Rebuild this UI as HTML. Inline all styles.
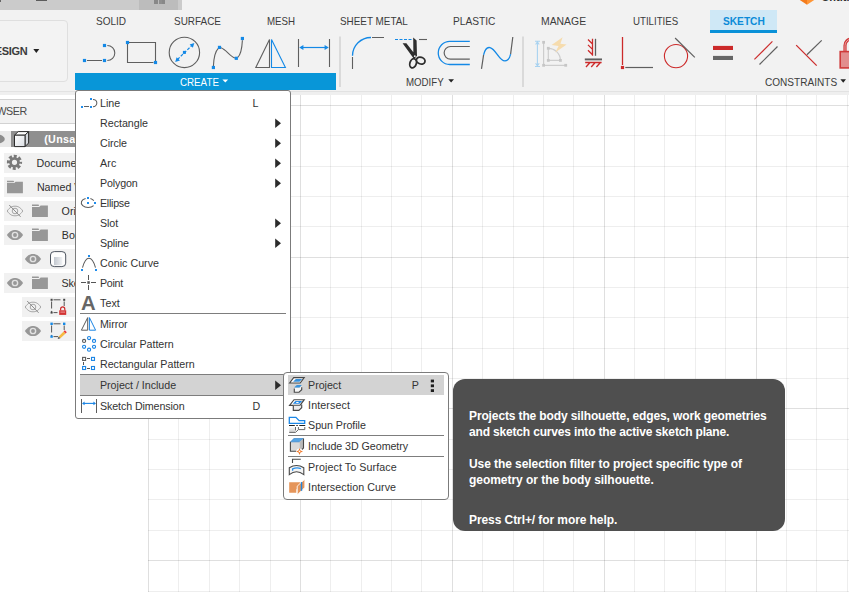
<!DOCTYPE html><html lang="en"><head><meta charset="utf-8"><title>Sketch - Create menu</title>
<style>
html,body{margin:0;padding:0;background:#fff}
body{width:849px;height:592px;overflow:hidden;position:relative;font-family:"Liberation Sans",sans-serif}
.abs{position:absolute;left:0;top:0;overflow:visible}
div.abs{width:849px;height:592px}
.box{position:absolute;box-sizing:border-box}
.t{position:absolute;white-space:pre;line-height:1;font-size:10.7px}
#app{position:absolute;left:0;top:0;width:849px;height:592px;overflow:hidden;background:#fff}
#toolbar{position:absolute;left:0;top:0;width:849px;height:91px;background:#f2f2f2}
.row{position:absolute;height:19.7px;background:#f1f1f1}
.sep{position:absolute;height:1px;background:#7d7d7d}
</style></head><body><div id="app">
<div id="canvas" class="abs"><svg class="abs" width="849" height="592" viewBox="0 0 849 592" shape-rendering="crispEdges"><style>.gm{fill:rgba(0,0,0,.065)}.gM{fill:rgba(0,0,0,.125)}</style><rect class="gM" x="148" y="95" width="1" height="497"/><rect class="gm" x="178" y="95" width="1" height="497"/><rect class="gm" x="209" y="95" width="1" height="497"/><rect class="gm" x="239" y="95" width="1" height="497"/><rect class="gm" x="270" y="95" width="1" height="497"/><rect class="gM" x="300" y="95" width="1" height="497"/><rect class="gm" x="330" y="95" width="1" height="497"/><rect class="gm" x="361" y="95" width="1" height="497"/><rect class="gm" x="391" y="95" width="1" height="497"/><rect class="gm" x="421" y="95" width="1" height="497"/><rect class="gM" x="452" y="95" width="1" height="497"/><rect class="gm" x="482" y="95" width="1" height="497"/><rect class="gm" x="513" y="95" width="1" height="497"/><rect class="gm" x="543" y="95" width="1" height="497"/><rect class="gm" x="573" y="95" width="1" height="497"/><rect class="gM" x="604" y="95" width="1" height="497"/><rect class="gm" x="634" y="95" width="1" height="497"/><rect class="gm" x="664" y="95" width="1" height="497"/><rect class="gm" x="695" y="95" width="1" height="497"/><rect class="gm" x="725" y="95" width="1" height="497"/><rect class="gM" x="756" y="95" width="1" height="497"/><rect class="gm" x="786" y="95" width="1" height="497"/><rect class="gm" x="816" y="95" width="1" height="497"/><rect class="gm" x="847" y="95" width="1" height="497"/><rect class="gM" x="148" y="105" width="701" height="1"/><rect class="gm" x="148" y="135" width="701" height="1"/><rect class="gm" x="148" y="166" width="701" height="1"/><rect class="gm" x="148" y="196" width="701" height="1"/><rect class="gm" x="148" y="226" width="701" height="1"/><rect class="gM" x="148" y="257" width="701" height="1"/><rect class="gm" x="148" y="287" width="701" height="1"/><rect class="gm" x="148" y="317" width="701" height="1"/><rect class="gm" x="148" y="348" width="701" height="1"/><rect class="gm" x="148" y="378" width="701" height="1"/><rect class="gM" x="148" y="408" width="701" height="1"/><rect class="gm" x="148" y="439" width="701" height="1"/><rect class="gm" x="148" y="469" width="701" height="1"/><rect class="gm" x="148" y="499" width="701" height="1"/><rect class="gm" x="148" y="530" width="701" height="1"/><rect class="gM" x="148" y="560" width="701" height="1"/><rect class="gm" x="148" y="591" width="701" height="1"/></svg></div>
<div id="toolbar">
<div class="box" style="left:0;top:0;width:182px;height:9.6px;background:#cbcbcb"></div>
<div class="box" style="left:139px;top:0;width:39px;height:9.6px;background:#bcbcbc"></div>
<div class="box" style="left:35.5px;top:0;width:11.4px;height:1px;background:#5c5c5c"></div>
<div class="box" style="left:0;top:0;width:1px;height:1.5px;background:#666"></div>
<div class="box" style="left:154.4px;top:0;width:3.3px;height:3.6px;background:#888"></div>
<div class="box" style="left:158.5px;top:0;width:3px;height:3.6px;background:#8e8e8e"></div>
<div class="box" style="left:162.2px;top:0;width:3.3px;height:3.6px;background:#888"></div>
<div class="box" style="left:-10px;top:20px;width:77.8px;height:61.5px;border:1.5px solid #dfdfdf;border-radius:4px;background:#f3f3f3"></div>
<div class="box" style="left:710.2px;top:9.9px;width:66.5px;height:23.6px;background:#cfe8f6;border-bottom:3.4px solid #0a91d8"></div>
<div class="box" style="left:75.2px;top:73px;width:260.8px;height:17px;background:#0896d8"></div>
<svg class="abs" width="849" height="100" viewBox="0 0 849 100"><g fill="none" stroke-width="1.1" stroke-linecap="butt"><path stroke="#5f5f5f" d="M87 60.5H102M107.3 45.5A7.5 7.5 0 0 1 107.3 60.5"/><rect x="82.90" y="58.90" width="3.2" height="3.2" fill="#1489e6"/><rect x="102.90" y="58.90" width="3.2" height="3.2" fill="#1489e6"/><rect x="102.90" y="43.90" width="3.2" height="3.2" fill="#1489e6"/><path stroke="#5f5f5f" d="M129 42.5H155.5V61M153.5 62.5H127.5V44"/><rect x="125.90" y="40.90" width="3.2" height="3.2" fill="#1489e6"/><rect x="153.90" y="60.90" width="3.2" height="3.2" fill="#1489e6"/><circle stroke="#5f5f5f" cx="184.4" cy="52.4" r="15.2"/><path stroke="#1489e6" stroke-width="1.2" stroke-dasharray="3 1.6" d="M177.5 59.5L191.8 45.5"/><path fill="#1489e6" stroke="none" d="M175.2 61.9L176.6 57.3L180 60.6ZM194.3 43.1L189.6 44.4L192.9 47.8Z"/><rect x="182.90" y="50.90" width="3" height="3" fill="#1489e6"/><path stroke="#5f5f5f" d="M213.4 66C213.8 58 215.5 51 218.3 48.3M221 47.8C226 49.5 230 56.5 235 58M237.6 57.6C240.5 55 242 48 242.4 40.2"/><rect x="211.80" y="65.90" width="3.2" height="3.2" fill="#1489e6"/><rect x="217.90" y="45.80" width="3.2" height="3.2" fill="#1489e6"/><rect x="234.70" y="56.70" width="3.2" height="3.2" fill="#1489e6"/><rect x="240.80" y="36.90" width="3.2" height="3.2" fill="#1489e6"/><path stroke="#5f5f5f" d="M269.5 39.4V67.5H255.8Z"/><path stroke="#1489e6" d="M271.5 39.4V67.5H285.4Z"/><path stroke="#5f5f5f" d="M298.5 39V67M329.5 39V67"/><path stroke="#1489e6" stroke-width="1.2" d="M301 47.5H327"/><path fill="#1489e6" stroke="none" d="M299.2 47.5L303.4 45.1V49.9ZM328.8 47.5L324.6 45.1V49.9Z"/><path stroke="#dadada" stroke-width="2" d="M340 36.5V87"/><path stroke="#dadada" stroke-width="2" d="M523 36.5V87"/><path stroke="#5f5f5f" d="M352.5 57V69M372 37.5H384"/><path stroke="#1489e6" stroke-width="1.3" d="M352.5 55.8A18.4 18.4 0 0 1 371 37.5"/><path stroke="#1489e6" stroke-width="1" stroke-dasharray="3 1.5" d="M395 39.5H412"/><path stroke="#5f5f5f" d="M419 39.5H427"/><path fill="#2e2e2e" stroke="none" d="M402.6 43.3L406.4 43.3L416.6 56.6L414 59ZM413.2 37.6L416.6 40.5L417 56L413.4 56.5Z"/><ellipse cx="413.1" cy="63.3" rx="3.2" ry="4.7" transform="rotate(18 413.1 63.3)" stroke="#2e2e2e" stroke-width="1.8"/><ellipse cx="420.7" cy="60.6" rx="4.4" ry="3.3" transform="rotate(18 420.7 60.6)" stroke="#2e2e2e" stroke-width="1.8"/><circle cx="414.8" cy="56.2" r="0.9" fill="#f2f2f2" stroke="none"/><path stroke="#1489e6" stroke-width="1.3" d="M469.8 41.4H449.8A11.55 11.55 0 0 0 449.8 64.5H469.8"/><path stroke="#5f5f5f" stroke-width="1.2" d="M469.8 46.5H450.5A6.35 6.35 0 0 0 450.5 59.2H469.8"/><path stroke="#5f5f5f" stroke-width="1.2" d="M481.5 68.8L483.6 54.8M510.6 54.2L512.8 37"/><path stroke="#1489e6" stroke-width="1.3" d="M483.6 54.8C485 49 487.5 47 490 47.6C496 49 499 61 505 60.9C508 60.8 509.8 58 510.6 54.2"/><path stroke="#a8d2f0" d="M537.4 41.5V66.2M535 41.3H540M535 66.5H540M535.6 44.5L537.4 42L539.2 44.5M535.6 63.3L537.4 65.8L539.2 63.3"/><path stroke="#cdcdcd" stroke-width="1.2" d="M543.6 42.5V65.3H565.5M548.3 48.3V60.4H560.4M548.3 48.3A12.1 12.1 0 0 1 560.4 60.4"/><rect x="542.20" y="40.90" width="2.8" height="2.8" fill="#c6c6c6"/><rect x="542.20" y="63.90" width="2.8" height="2.8" fill="#c6c6c6"/><rect x="564.30" y="63.90" width="2.8" height="2.8" fill="#c6c6c6"/><rect x="546.90" y="46.90" width="2.8" height="2.8" fill="#c6c6c6"/><rect x="546.90" y="59.00" width="2.8" height="2.8" fill="#c6c6c6"/><rect x="559.00" y="59.00" width="2.8" height="2.8" fill="#c6c6c6"/><path fill="#f6dcae" stroke="none" d="M562.6 37.2L551.6 45L558.6 46L555.2 52.6L566.6 44.6L560.4 43.8Z"/><path stroke="#5f5f5f" stroke-width="1.3" d="M595.5 38.8V55.8"/><path stroke="#5f5f5f" stroke-width="1.9" d="M584.8 59.4H602"/><path stroke="#cc2a2a" stroke-width="1.3" d="M592.5 38.8V55.8M592.5 44L588 39.5M592.5 49.4L588 44.9M592.5 54.8L588 50.3M585.2 62.5H601.6M590 62.5L586 67M595.2 62.5L591.2 67M600.4 62.5L596.4 67"/><path stroke="#cc2a2a" stroke-width="1.3" d="M622.5 37V65"/><rect x="620.90" y="65.90" width="3.2" height="3.2" fill="#cc2a2a"/><path stroke="#5f5f5f" stroke-width="1.2" d="M625.3 67.5H653"/><circle stroke="#cc2a2a" stroke-width="1.1" cx="676" cy="56.1" r="11.6"/><path stroke="#5f5f5f" stroke-width="1.2" d="M675.1 38L694.8 57.4"/><rect x="713" y="45.9" width="20" height="4.1" fill="#cc2a2a" stroke="none"/><rect x="713" y="55.9" width="20" height="4.1" fill="#666" stroke="none"/><path stroke="#cc2a2a" stroke-width="1.2" d="M754.4 59.4L772.4 41.4"/><path stroke="#5f5f5f" stroke-width="1.2" d="M759.5 64.5L777.5 46.5"/><path stroke="#cc2a2a" stroke-width="1.2" d="M796.2 45.1L816.7 65.7"/><path stroke="#5f5f5f" stroke-width="1.2" d="M806.9 54.7L821.7 40.4"/><path stroke="#cf3a3a" stroke-width="3.2" d="M845 51V45.5A6.4 6.4 0 0 1 857.8 45.5V51"/><path stroke="#eaa0a0" stroke-width="1" d="M845 51V45.5A6.4 6.4 0 0 1 857.8 45.5V51"/><rect x="840.2" y="51.6" width="20" height="16.3" fill="#e28e8e" stroke="#cf3a3a" stroke-width="1.6"/></g><path fill="#fff" d="M222.4 79.4H228.2L225.3 82.6Z"/><path fill="#222" d="M448.3 79.2H454L451.15 82.5Z"/><path fill="#222" d="M840.4 79.3H846L843.2 82.8Z"/><path fill="#222" d="M33.3 49H39.3L36.3 53Z"/><path fill="#f47c1c" d="M799.8 0L807 4.7V0Z"/><path fill="#ff9636" d="M807 0V4.7L814.2 0Z"/></svg>
<span class="t" style="top:15px;font-size:11px;line-height:12px;letter-spacing:0px;color:#3c3c3c;transform:scaleX(0.9117);transform-origin:0 0;left:95.90px;">SOLID</span><span class="t" style="top:15px;font-size:11px;line-height:12px;letter-spacing:0px;color:#3c3c3c;transform:scaleX(0.9044);transform-origin:0 0;left:173.70px;">SURFACE</span><span class="t" style="top:15px;font-size:11px;line-height:12px;letter-spacing:0px;color:#3c3c3c;transform:scaleX(0.8842);transform-origin:0 0;left:266.80px;">MESH</span><span class="t" style="top:15px;font-size:11px;line-height:12px;letter-spacing:0px;color:#3c3c3c;transform:scaleX(0.8993);transform-origin:0 0;left:339.90px;">SHEET METAL</span><span class="t" style="top:15px;font-size:11px;line-height:12px;letter-spacing:0px;color:#3c3c3c;transform:scaleX(0.9246);transform-origin:0 0;left:452.70px;">PLASTIC</span><span class="t" style="top:15px;font-size:11px;line-height:12px;letter-spacing:0px;color:#3c3c3c;transform:scaleX(0.9457);transform-origin:0 0;left:541.10px;">MANAGE</span><span class="t" style="top:15px;font-size:11px;line-height:12px;letter-spacing:0px;color:#3c3c3c;transform:scaleX(0.8803);transform-origin:0 0;left:633.30px;">UTILITIES</span><span class="t" style="top:15px;font-size:11px;line-height:12px;letter-spacing:0px;color:#0b8bd8;font-weight:700;transform:scaleX(0.9241);transform-origin:0 0;left:722.60px;">SKETCH</span><span class="t" style="top:76px;font-size:10.7px;line-height:12px;letter-spacing:0px;color:#ffffff;transform:scaleX(0.914);transform-origin:0 0;left:180.00px;">CREATE</span><span class="t" style="top:76px;font-size:10.7px;line-height:12px;letter-spacing:0px;color:#3c3c3c;transform:scaleX(0.9071);transform-origin:0 0;left:406.00px;">MODIFY</span><span class="t" style="top:76px;font-size:10.7px;line-height:12px;letter-spacing:0px;color:#3c3c3c;transform:scaleX(0.9411);transform-origin:0 0;left:764.80px;">CONSTRAINTS</span><span class="t" style="top:45px;font-size:11px;line-height:12px;letter-spacing:-0.3px;color:#3c3c3c;font-weight:700;right:821.50px;">DESIGN</span><span class="t" style="top:-9px;font-size:11px;line-height:12px;letter-spacing:0px;color:#333;font-weight:700;left:821.40px;">Untitled</span>
</div>
<div class="box" style="left:0;top:90.6px;width:849px;height:1px;background:#e2e2e2"></div>
<div class="box" style="left:0;top:91.6px;width:849px;height:3.2px;background:#efefef"></div>
<div id="browser" class="abs">
<div class="box" style="left:0;top:98.8px;width:148px;height:25.4px;background:#f2f2f2;border-top:1px solid #d2d2d2;border-bottom:1px solid #d2d2d2"></div>
<div class="row" style="left:0;top:131px;width:11px;height:15.8px;background:#e9e9e9"></div>
<div class="row" style="left:11px;top:131px;width:137px;height:15.8px;background:#8f8f8f"></div>
<div class="row" style="left:4px;top:153px;width:144px"></div>
<div class="row" style="left:4px;top:177px;width:144px"></div>
<div class="row" style="left:4px;top:201px;width:144px"></div>
<div class="row" style="left:4px;top:225px;width:144px"></div>
<div class="row" style="left:22px;top:249px;width:126px"></div>
<div class="row" style="left:4px;top:273px;width:144px"></div>
<div class="row" style="left:22px;top:297px;width:126px"></div>
<div class="row" style="left:22px;top:321px;width:126px"></div>
<svg class="abs" width="76" height="592" viewBox="0 0 76 592"><defs><linearGradient id="cubeg" x1="0" y1="0" x2="1" y2="1"><stop offset="0" stop-color="#ffffff"/><stop offset="1" stop-color="#d9dde3"/></linearGradient><linearGradient id="cylg" x1="0" y1="0" x2="1" y2="0"><stop offset="0" stop-color="#c2c7cf"/><stop offset="1" stop-color="#eff1f3"/></linearGradient></defs><ellipse cx="-2.2" cy="139" rx="7" ry="4.4" fill="#8c8c8c"/><g stroke="#2b2b2b" stroke-width="1" stroke-linejoin="round"><path fill="#fdfdfd" d="M14.5 135.2L18.2 131.6H28.6L25 135.2Z"/><path fill="#d5d9de" d="M25 135.2L28.6 131.6V143L25 146.6Z"/><rect x="14.5" y="135.2" width="10.5" height="11.4" fill="url(#cubeg)"/></g><g fill="none" stroke="#7a7a7a"><circle cx="14.5" cy="162.3" r="5.9" stroke-width="3.4" stroke-dasharray="2.9 1.734" stroke-dashoffset="1.45"/><circle cx="14.5" cy="162.3" r="4" stroke-width="2.8"/></g><path fill="#979797" d="M7 180.8H13.4L14.2 181.5L13.6 182.3H7Z"/><path fill="#979797" d="M7 183.10000000000002H14.2L15.6 181.8H22.9V193.20000000000002H7Z"/><g fill="none" stroke="#a6a6a6" stroke-width="1"><path d="M7.2 211C10 206.89999999999998 12.4 206.2 15 206.2C17.6 206.2 20 206.89999999999998 22.8 211C20 215.10000000000002 17.6 215.8 15 215.8C12.4 215.8 10 215.10000000000002 7.2 211Z"/><circle cx="15" cy="211" r="2.8"/><path stroke="#8c8c8c" d="M9.2 205L20.6 216.8"/></g><path fill="#979797" d="M32 204.6H38.4L39.2 205.29999999999998L38.6 206.1H32Z"/><path fill="#979797" d="M32 206.9H39.2L40.6 205.6H47.9V217.0H32Z"/><path fill="#979797" d="M6.9 235C10 230.6 12.4 229.9 15 229.9C17.6 229.9 20 230.6 23.1 235C20 239.4 17.6 240.1 15 240.1C12.4 240.1 10 239.4 6.9 235Z"/><circle cx="15" cy="235" r="2.65" fill="none" stroke="#e2e2e2" stroke-width="1.4"/><path fill="#979797" d="M32 228.6H38.4L39.2 229.29999999999998L38.6 230.1H32Z"/><path fill="#979797" d="M32 230.9H39.2L40.6 229.6H47.9V241.0H32Z"/><path fill="#979797" d="M24.9 259C28 254.6 30.4 253.9 33 253.9C35.6 253.9 38 254.6 41.1 259C38 263.40000000000003 35.6 264.1 33 264.1C30.4 264.1 28 263.40000000000003 24.9 259Z"/><circle cx="33" cy="259" r="2.65" fill="none" stroke="#e2e2e2" stroke-width="1.4"/><rect x="50.5" y="251.6" width="15.2" height="15" rx="3.8" ry="3.4" fill="#fdfdfd" stroke="#3a424e" stroke-width=".9"/><rect x="54" y="257" width="8.3" height="8.2" fill="url(#cylg)"/><path fill="#979797" d="M6.9 283C10 278.59999999999997 12.4 277.9 15 277.9C17.6 277.9 20 278.59999999999997 23.1 283C20 287.40000000000003 17.6 288.1 15 288.1C12.4 288.1 10 287.40000000000003 6.9 283Z"/><circle cx="15" cy="283" r="2.65" fill="none" stroke="#e2e2e2" stroke-width="1.4"/><path fill="#979797" d="M32 276.6H38.4L39.2 277.3L38.6 278.1H32Z"/><path fill="#979797" d="M32 278.90000000000003H39.2L40.6 277.6H47.9V289.0H32Z"/><g fill="none" stroke="#a6a6a6" stroke-width="1"><path d="M25.2 307C28 302.9 30.4 302.2 33 302.2C35.6 302.2 38 302.9 40.8 307C38 311.1 35.6 311.8 33 311.8C30.4 311.8 28 311.1 25.2 307Z"/><circle cx="33" cy="307" r="2.8"/><path stroke="#8c8c8c" d="M27.2 301L38.6 312.8"/></g><g fill="none" stroke="#555" stroke-width="1"><path stroke-dasharray="7 2.4" d="M51.6 301.5V312.6M53.5 299.8H62.5M64.2 301.5V306"/><path d="M53.5 312.6H57.5"/></g><rect x="50.60" y="298.80" width="2" height="2" fill="#444"/><rect x="63.20" y="298.80" width="2" height="2" fill="#444"/><rect x="50.60" y="311.60" width="2" height="2" fill="#444"/><path d="M60.6 310.5V309A2.1 2.1 0 0 1 64.8 309V310.5" fill="none" stroke="#cc2a2a" stroke-width="1.2"/><rect x="59.2" y="310.3" width="7" height="4.6" fill="#d23232"/><rect x="60.4" y="311.6" width="4.6" height="1" fill="#ee9a9a"/><path fill="#979797" d="M24.9 331C28 326.59999999999997 30.4 325.9 33 325.9C35.6 325.9 38 326.59999999999997 41.1 331C38 335.40000000000003 35.6 336.1 33 336.1C30.4 336.1 28 335.40000000000003 24.9 331Z"/><circle cx="33" cy="331" r="2.65" fill="none" stroke="#e2e2e2" stroke-width="1.4"/><g fill="none" stroke="#555" stroke-width="1"><path stroke-dasharray="7 2.4" d="M51.6 325.5V336.6M53.5 323.8H62.5"/><path d="M64.2 325.5V330M53.5 336.6H58"/></g><rect x="50.40" y="322.60" width="2.4" height="2.4" fill="#1489e6"/><rect x="63.00" y="322.60" width="2.4" height="2.4" fill="#1489e6"/><rect x="50.40" y="335.40" width="2.4" height="2.4" fill="#1489e6"/><path fill="#f5b942" d="M58.6 336.6L63.6 331.4L65.6 333.4L60.4 338.2Z"/><path fill="#e8383d" d="M63.6 331.4L64.8 330.2L66.8 332.2L65.6 333.4Z"/><path fill="#555" d="M58.6 336.6L60.4 338.2L57.6 339Z"/></svg>
<span class="t" style="top:105px;font-size:10.7px;line-height:12px;letter-spacing:-0.4px;color:#4a4a4a;right:822.10px;">BROWSER</span><span class="t" style="top:133px;font-size:10.7px;line-height:12px;letter-spacing:0.35px;color:#ffffff;font-weight:700;left:44.20px;">(Unsaved)</span><span class="t" style="top:157px;font-size:10.7px;line-height:12px;letter-spacing:0px;color:#2e2e2e;left:36.60px;">Document Settings</span><span class="t" style="top:181px;font-size:10.7px;line-height:12px;letter-spacing:0px;color:#2e2e2e;left:36.90px;">Named Views</span><span class="t" style="top:205px;font-size:10.7px;line-height:12px;letter-spacing:0px;color:#2e2e2e;left:61.60px;">Origin</span><span class="t" style="top:229px;font-size:10.7px;line-height:12px;letter-spacing:0px;color:#2e2e2e;left:61.80px;">Bodies</span><span class="t" style="top:277px;font-size:10.7px;line-height:12px;letter-spacing:0px;color:#2e2e2e;left:61.40px;">Sketches</span>
</div>
<div id="menu" class="abs">
<div class="box" style="left:75px;top:90px;width:216px;height:329px;background:#fff;border:1px solid #7b7b7b;border-radius:3px"></div>
<div class="box" style="left:80.3px;top:375.2px;width:208px;height:19.8px;background:#d3d3d3"></div>
<div class="sep" style="left:80.3px;top:312.8px;width:205.4px"></div>
<div class="sep" style="left:80.3px;top:374.2px;width:205.4px"></div>
<div class="sep" style="left:80.3px;top:395px;width:205.4px"></div>
<svg class="abs" width="300" height="592" viewBox="0 0 300 592"><g fill="none" stroke-width="1"><rect x="84" y="106" width="5" height="1" fill="#606060" stroke="none"/><path stroke="#5c5c5c" stroke-width="1.05" d="M93 99.4A3.85 3.65 0 0 1 93 106.7"/><rect x="81" y="106" width="2" height="2" fill="#1e8cec" stroke="none"/><rect x="90" y="106" width="2" height="2" fill="#1e8cec" stroke="none"/><rect x="90" y="98" width="2" height="2" fill="#1e8cec" stroke="none"/><path stroke="#5c5c5c" stroke-width="1.05" d="M85.6 198.4A6.8 4.75 0 1 0 93.6 205.6M90.4 198.4Q92.4 199 93.8 200.6"/><rect x="87" y="197" width="2" height="2" fill="#1e8cec" stroke="none"/><rect x="87" y="202" width="2" height="2" fill="#1e8cec" stroke="none"/><rect x="94" y="202" width="2" height="2" fill="#1e8cec" stroke="none"/><path stroke="#5c5c5c" stroke-width="1.05" d="M82.5 267.6C84.2 261.6 86.6 258.3 88.9 258.3C91.2 258.3 93.8 261.6 95.5 267.6"/><rect x="88" y="255" width="2" height="2" fill="#1e8cec" stroke="none"/><rect x="81" y="269" width="2" height="2" fill="#1e8cec" stroke="none"/><rect x="95" y="269" width="2" height="2" fill="#1e8cec" stroke="none"/><rect x="81" y="282" width="5" height="1" fill="#555" stroke="none"/><rect x="91" y="282" width="5" height="1" fill="#555" stroke="none"/><rect x="88" y="275" width="1" height="5" fill="#555" stroke="none"/><rect x="88" y="285" width="1" height="5" fill="#555" stroke="none"/><rect x="87.3" y="281.2" width="2.5" height="2.6" fill="#5a5a5a" stroke="none"/><path stroke="#5c5c5c" d="M87.7 317.6V330.2H81.4Z"/><path stroke="#1a84e4" d="M89.4 317.6V330.2H95.6Z"/><circle cx="89.05" cy="338.00" r="1.55" stroke-width="1.15" stroke="#1a84e4"/><circle cx="94.03" cy="340.93" r="1.55" stroke-width="1.15" stroke="#1a84e4"/><circle cx="94.03" cy="346.78" r="1.55" stroke-width="1.15" stroke="#1a84e4"/><circle cx="89.05" cy="349.70" r="1.55" stroke-width="1.15" stroke="#1a84e4"/><circle cx="84.07" cy="346.78" r="1.55" stroke-width="1.15" stroke="#1a84e4"/><circle cx="84.07" cy="340.93" r="1.55" stroke-width="1.15" stroke="#5c5c5c"/><rect x="82.6" y="357.4" width="3" height="3" stroke="#5c5c5c" stroke-width="1.1"/><rect x="91.5" y="357.4" width="3" height="3" stroke="#1a84e4" stroke-width="1.1"/><rect x="82.6" y="366.5" width="3" height="3" stroke="#1a84e4" stroke-width="1.1"/><rect x="91.5" y="366.5" width="3" height="3" stroke="#1a84e4" stroke-width="1.1"/><rect x="87" y="358" width="3" height="1" fill="#555" stroke="none"/><rect x="87" y="368" width="3" height="1" fill="#555" stroke="none"/><rect x="83" y="362" width="1" height="3" fill="#555" stroke="none"/><rect x="81" y="399" width="1" height="14" fill="#5c5c5c" stroke="none"/><rect x="96" y="399" width="1" height="14" fill="#5c5c5c" stroke="none"/><path stroke="#1a84e4" stroke-width="1.1" d="M83.4 403.4H94.6"/><path fill="#1a84e4" stroke="none" d="M82 403.4L84.6 401.6V405.2ZM96 403.4L93.4 401.6V405.2Z"/></g><path fill="#2b2b2b" d="M275.2 118.40L281.0 123.2L275.2 128.00Z"/><path fill="#2b2b2b" d="M275.2 138.40L281.0 143.2L275.2 148.00Z"/><path fill="#2b2b2b" d="M275.2 158.40L281.0 163.2L275.2 168.00Z"/><path fill="#2b2b2b" d="M275.2 178.40L281.0 183.2L275.2 188.00Z"/><path fill="#2b2b2b" d="M275.2 218.40L281.0 223.2L275.2 228.00Z"/><path fill="#2b2b2b" d="M275.2 238.40L281.0 243.2L275.2 248.00Z"/><path fill="#2b2b2b" d="M275.2 380.40L281.0 385.2L275.2 390.00Z"/></svg>
<span class="t" style="top:97px;font-size:10.7px;line-height:12px;letter-spacing:0.02px;color:#333333;left:100.00px;">Line</span><span class="t" style="top:117px;font-size:10.7px;line-height:12px;letter-spacing:-0.016px;color:#333333;left:100.00px;">Rectangle</span><span class="t" style="top:137px;font-size:10.7px;line-height:12px;letter-spacing:-0.071px;color:#333333;left:100.00px;">Circle</span><span class="t" style="top:157px;font-size:10.7px;line-height:12px;letter-spacing:0.1px;color:#333333;left:100.00px;">Arc</span><span class="t" style="top:177px;font-size:10.7px;line-height:12px;letter-spacing:-0.161px;color:#333333;left:100.00px;">Polygon</span><span class="t" style="top:197px;font-size:10.7px;line-height:12px;letter-spacing:-0.269px;color:#333333;left:100.00px;">Ellipse</span><span class="t" style="top:217px;font-size:10.7px;line-height:12px;letter-spacing:-0.08px;color:#333333;left:100.00px;">Slot</span><span class="t" style="top:237px;font-size:10.7px;line-height:12px;letter-spacing:-0.17px;color:#333333;left:100.00px;">Spline</span><span class="t" style="top:257px;font-size:10.7px;line-height:12px;letter-spacing:0.017px;color:#333333;left:100.00px;">Conic Curve</span><span class="t" style="top:277px;font-size:10.7px;line-height:12px;letter-spacing:-0.275px;color:#333333;left:100.00px;">Point</span><span class="t" style="top:297px;font-size:10.7px;line-height:12px;letter-spacing:0.048px;color:#333333;left:100.00px;">Text</span><span class="t" style="top:318px;font-size:10.7px;line-height:12px;letter-spacing:-0.051px;color:#333333;left:100.00px;">Mirror</span><span class="t" style="top:338px;font-size:10.7px;line-height:12px;letter-spacing:-0.034px;color:#333333;left:100.00px;">Circular Pattern</span><span class="t" style="top:358px;font-size:10.7px;line-height:12px;letter-spacing:-0.019px;color:#333333;left:100.00px;">Rectangular Pattern</span><span class="t" style="top:379px;font-size:10.7px;line-height:12px;letter-spacing:-0.032px;color:#333333;left:100.00px;">Project / Include</span><span class="t" style="top:400px;font-size:10.7px;line-height:12px;letter-spacing:-0.103px;color:#333333;left:100.00px;">Sketch Dimension</span><span class="t" style="top:97px;font-size:10.7px;line-height:12px;letter-spacing:0px;color:#333333;left:252.60px;">L</span><span class="t" style="top:400px;font-size:10.7px;line-height:12px;letter-spacing:0px;color:#333333;left:252.50px;">D</span><span class="t" style="top:292px;font-size:20.3px;line-height:22px;letter-spacing:0px;color:#666666;font-weight:700;left:80.90px;">A</span>
</div>
<div id="submenu" class="abs">
<div class="box" style="left:283.4px;top:371.8px;width:166px;height:127.9px;background:#fff;border:1px solid #7b7b7b;border-radius:4px"></div>
<div class="box" style="left:288.1px;top:375.3px;width:155.9px;height:19.7px;background:#d3d3d3"></div>
<div class="sep" style="left:288.2px;top:434.9px;width:155.8px"></div>
<div class="sep" style="left:288.2px;top:455.9px;width:155.8px"></div>
<svg class="abs" width="460" height="592" viewBox="0 0 460 592"><defs><linearGradient id="spg" x1="0" y1="0" x2="0" y2="1"><stop offset="0" stop-color="#f6f6f6"/><stop offset="1" stop-color="#cfcfcf"/></linearGradient></defs><g fill="none" stroke-width="1.15" stroke-linejoin="miter"><path stroke="#484848" fill="#fdfdfd" d="M289.6 383L293.7 377.6H304.2L300.2 383Z"/><path stroke="none" fill="#3590dc" d="M293.1 381.8L295.8 378.9H302.2L299.5 381.8Z"/><path stroke="none" fill="#f6f6f6" d="M294.3 388H299.4L301.7 386V389.8L299 392.2H294.3Z"/><path stroke="none" fill="#3b94dc" d="M294.1 387.6L296.8 385.1H301.9L299.5 387.6Z"/><path stroke="#484848" d="M294.3 388.6V392.2H299L301.7 389.8V387.2"/><path stroke="#484848" fill="#fdfdfd" d="M289.6 405.3L294 399.7H304.2L300 405.3Z"/><path stroke="none" fill="#1f86e4" d="M292.8 403.8L295.5 400.9H302.2L299.5 403.8Z"/><rect x="296.2" y="401.9" width="2.4" height="1.1" fill="#fff" stroke="none"/><path stroke="none" fill="#ececec" d="M293.3 405.8H301.7V407.8L298.8 410.4H293.3Z"/><path stroke="#484848" d="M293.3 405.8V410.4H298.8L301.7 407.8V404.6"/><path stroke="#1a86e6" stroke-width="1.3" d="M289.3 417.3H295.9L299.1 420.7H304.7V423.4H289.3Z"/><path stroke="#222" stroke-width="1.1" d="M289 425.5H294.8M296.3 425.5H297.8M299.3 425.5H305.2"/><path stroke="none" fill="url(#spg)" d="M289.2 427.2H295.5V432H289.2Z"/><path stroke="#666" stroke-width="1" d="M289.2 432.4H295.5L298.4 429.6H304.8V427M295.5 427V430.4M298.4 427V429.4"/><path stroke="none" fill="#dadada" d="M290.4 442H299.5V451.3H290.4Z"/><path stroke="#2f7fc8" stroke-width=".7" fill="#55a5e6" d="M290.6 441.8L293.9 438.6H303.3L299.6 441.8Z"/><path stroke="none" fill="#b9b9b9" d="M299.5 442L303.4 438.6V448.1L299.5 451.3Z"/><path stroke="#484848" stroke-width="1.1" d="M290.4 441.8V451.3H296M303.5 438.6V448L301.6 449.8"/><circle cx="299.5" cy="451.4" r="3" fill="#fff" stroke="none"/><path stroke="none" fill="#f0792a" d="M299.5 447.9L300.5 450.4L303 451.4L300.5 452.4L299.5 454.9L298.5 452.4L296 451.4L298.5 450.4Z"/><circle cx="299.5" cy="451.4" r=".8" fill="#fff" stroke="none"/><path stroke="#484848" stroke-width="1.1" d="M292.5 463V459.3H300.8"/><path stroke="#484848" stroke-width="1.1" fill="#f4f4f4" d="M289.3 467.8Q296.5 463.2 303.8 467.8V474.6Q296.5 468.8 289.3 474.6Z"/><path stroke="#2a8ee6" stroke-width="1.3" d="M292.6 470.8V468.9Q296.6 467.2 300.9 468.6"/><path fill="#e5955a" stroke="none" d="M289.2 482.3H300.2V486L296.4 489.6V492.8H289.2Z"/><path stroke="#fff" stroke-width=".9" fill="#e5955a" d="M297.2 486.2L304.9 479V487.4L297.2 495Z"/><path stroke="#1f86e0" stroke-width="1.4" d="M301.5 482.1V490.8"/></g><rect x="430.8" y="379.6" width="3.2" height="2.8" fill="#1e1e1e"/><rect x="430.8" y="384.4" width="3.2" height="2.8" fill="#1e1e1e"/><rect x="430.8" y="389.2" width="3.2" height="2.8" fill="#1e1e1e"/></svg>
<span class="t" style="top:379px;font-size:10.7px;line-height:12px;letter-spacing:-0.038px;color:#333333;left:308.10px;">Project</span><span class="t" style="top:399px;font-size:10.7px;line-height:12px;letter-spacing:0.1px;color:#333333;left:308.10px;">Intersect</span><span class="t" style="top:419px;font-size:10.7px;line-height:12px;letter-spacing:-0.045px;color:#333333;left:308.10px;">Spun Profile</span><span class="t" style="top:440px;font-size:10.7px;line-height:12px;letter-spacing:-0.052px;color:#333333;left:308.10px;">Include 3D Geometry</span><span class="t" style="top:461px;font-size:10.7px;line-height:12px;letter-spacing:0.087px;color:#333333;left:308.10px;">Project To Surface</span><span class="t" style="top:481px;font-size:10.7px;line-height:12px;letter-spacing:0.07px;color:#333333;left:308.10px;">Intersection Curve</span><span class="t" style="top:379px;font-size:10.7px;line-height:12px;letter-spacing:0px;color:#333333;left:411.80px;">P</span>
</div>
<div id="tooltip" class="abs">
<div class="box" style="left:453.2px;top:379px;width:332px;height:152px;background:#4f4f4f;border-radius:12px"></div>
<span class="t" style="top:409px;font-size:12px;line-height:14px;letter-spacing:-0.127px;color:#ffffff;font-weight:700;left:469.00px;">Projects the body silhouette, edges, work geometries</span><span class="t" style="top:425px;font-size:12px;line-height:14px;letter-spacing:-0.168px;color:#ffffff;font-weight:700;left:469.00px;">and sketch curves into the active sketch plane.</span><span class="t" style="top:457px;font-size:12px;line-height:14px;letter-spacing:-0.074px;color:#ffffff;font-weight:700;left:469.00px;">Use the selection filter to project specific type of</span><span class="t" style="top:473px;font-size:12px;line-height:14px;letter-spacing:-0.042px;color:#ffffff;font-weight:700;left:469.00px;">geometry or the body silhouette.</span><span class="t" style="top:513px;font-size:12px;line-height:14px;letter-spacing:-0.081px;color:#ffffff;font-weight:700;left:469.00px;">Press Ctrl+/ for more help.</span>
</div>
</div></body></html>
